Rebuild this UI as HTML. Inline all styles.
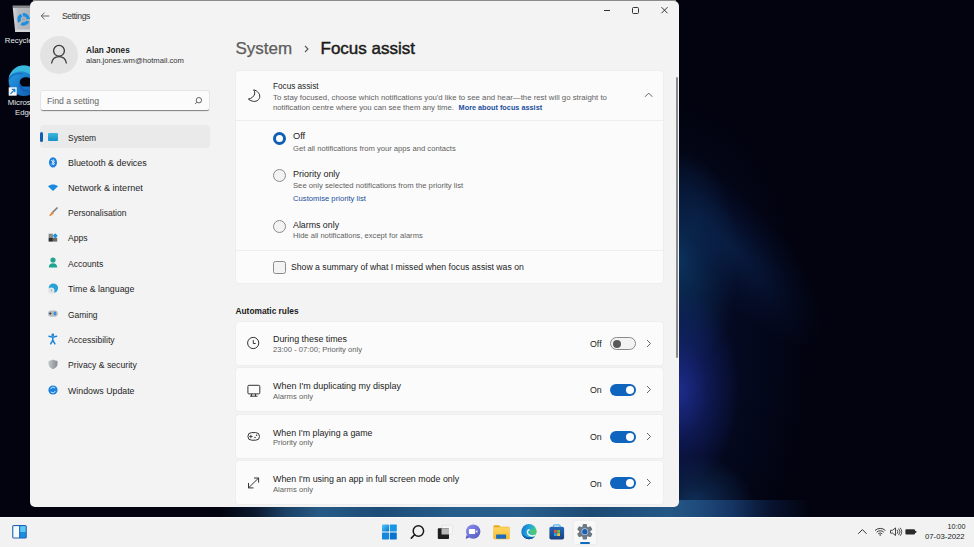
<!DOCTYPE html>
<html><head><meta charset="utf-8">
<style>
*{margin:0;padding:0;box-sizing:border-box}
html,body{width:974px;height:547px;overflow:hidden}
body{font-family:"Liberation Sans",sans-serif;position:relative;background:#02030f;color:#1b1b1b}
.a{position:absolute}
.t{position:absolute;white-space:nowrap;line-height:1}
#desk{left:0;top:0;width:974px;height:517px;background:#02030f;overflow:hidden}
#g1{left:679px;top:100px;width:260px;height:417px;background:
 radial-gradient(ellipse 60px 100px at 0px 290px, rgba(36,52,165,0.8), rgba(24,40,130,0.45) 50%, rgba(0,0,0,0) 100%),
 radial-gradient(ellipse 60px 50px at 15px 405px, rgba(26,80,140,0.55), rgba(0,0,0,0) 100%),
 radial-gradient(ellipse 60px 110px at 0px 160px, rgba(14,62,110,0.75), rgba(0,0,0,0) 100%),
 radial-gradient(ellipse 130px 250px at 0px 250px, rgba(10,25,75,0.55), rgba(0,0,0,0) 100%)}
#g3{left:610px;top:205px;width:250px;height:90px;transform:rotate(48deg);background:radial-gradient(ellipse 125px 45px at 50% 50%, rgba(12,45,95,0.5), rgba(10,30,80,0.2) 60%, rgba(0,0,0,0) 100%)}
#g2{left:220px;top:500px;width:600px;height:17px;background:linear-gradient(90deg, rgba(0,0,0,0) 0px, rgba(20,45,75,0.5) 35px, rgba(30,75,115,0.85) 65px, rgba(40,95,140,0.95) 100px, rgba(30,80,125,0.95) 160px, rgba(40,98,145,0.95) 230px, rgba(42,100,148,0.95) 300px, rgba(30,78,122,0.95) 370px, rgba(38,92,140,0.95) 450px, rgba(24,60,110,0.85) 510px, rgba(12,30,70,0.6) 550px, rgba(0,0,0,0) 590px)}
#win{left:30px;top:1px;width:649px;height:505.6px;background:#f3f3f3;border-radius:5px}
#task{left:0;top:517px;width:974px;height:30px;background:#f2f2f2;border-top:1px solid #fafafa}
.card{position:absolute;background:#fbfbfb;border-radius:3px;box-shadow:0 0 0 1px #eeeeee}
.nav{position:absolute;left:68px;font-size:8.65px;line-height:1;white-space:nowrap;color:#1f1f1f}
.title{font-size:8.95px;color:#1b1b1b}
.sub{font-size:7.67px;color:#5f5f5f}
.radio{position:absolute;width:13px;height:13px;border-radius:50%;border:1px solid #8b8b8b;background:#f3f3f3}
.tog{position:absolute;left:610px;width:26px;height:12px;border-radius:6px;background:#0f64be}
.tog i{position:absolute;right:2.5px;top:2px;width:8px;height:8px;border-radius:50%;background:#fff}
.chev{position:absolute;left:645px}
</style></head>
<body>
<div id="desk" class="a"></div><div id="g1" class="a"></div><div id="g2" class="a"></div><div id="g3" class="a"></div>

<!-- desktop icons -->
<svg class="a" style="left:0;top:0" width="30" height="120" viewBox="0 0 30 120">
 <defs>
  <linearGradient id="bin" x1="0" y1="0" x2="1" y2="0"><stop offset="0" stop-color="#d6d8dc"/><stop offset="0.3" stop-color="#b8bbbf"/><stop offset="1" stop-color="#aeb2b6"/></linearGradient>
  <linearGradient id="edg" x1="0" y1="0" x2="1" y2="1"><stop offset="0" stop-color="#35b4e8"/><stop offset="0.55" stop-color="#1a7fd0"/><stop offset="1" stop-color="#114fa0"/></linearGradient>
 </defs>
 <path d="M12.7 7.6h18v24.3h-15.5z" fill="url(#bin)"/>
 <path d="M12.5 5.4h18.2v2.6h-17.9z" fill="#85898e"/>
 <path d="M15.2 29.5h15.5v2.4h-15.3z" fill="#d2d4d7"/>
 <circle cx="23.6" cy="19.4" r="4.6" fill="none" stroke="#1e8fe0" stroke-width="3.4" stroke-dasharray="7.6 2.05" transform="rotate(-100 23.6 19.4)"/>
 <circle cx="23.6" cy="19.4" r="1.6" fill="#9aa6b0"/>
 <clipPath id="ec"><circle cx="23.8" cy="80.8" r="15.2"/></clipPath>
 <g clip-path="url(#ec)">
 <rect x="0" y="60" width="40" height="40" fill="url(#edg)"/>
 <path d="M8 79C11 73 17 70.8 23 71.6C28 72.5 31 75 33 78V60H0V79z" fill="#38b8dc"/>
 <path d="M8.8 79.5C11.5 74.5 17 72.8 22.5 73.8" fill="none" stroke="#1565b8" stroke-width="1.6" opacity="0.7"/>
 <path d="M19.7 82C20 78.5 23 77 26.5 77.2C29 77.4 31 78.5 32 80V86.5H22.5C20.8 85.5 19.7 84 19.7 82z" fill="#02030f"/>
 <path d="M29.5 84.5c1.2-1 2-2.5 2.5-4v5z" fill="#3cbf8a"/>
 <path d="M19.5 84.5C20.5 89 25 91.5 31 91.5" fill="none" stroke="#1560b8" stroke-width="2.5"/>
 </g>
 <rect x="8.7" y="87.3" width="8" height="8.4" fill="#f4f6fa"/>
 <path d="M10.5 93.8l4.3-4.3M11.8 89.3h3v3" fill="none" stroke="#1a7fd0" stroke-width="1.2"/>
</svg>
<div class="t" style="left:4.8px;top:37px;font-size:7.8px;color:#e8e8e8">Recycle</div>
<div class="t" style="left:7.8px;top:98.8px;font-size:7.8px;color:#e8e8e8">Micros</div>
<div class="t" style="left:15px;top:108.8px;font-size:7.8px;color:#e8e8e8">Edge</div>
<div class="a" style="left:33px;top:0;width:643px;height:1px;background:#8c8c8c"></div><div id="win" class="a"></div>

<!-- title bar -->
<svg class="a" style="left:40px;top:11px" width="10" height="10" viewBox="0 0 10 10"><path d="M9.2 5H1.2M4.6 1.6L1.2 5l3.4 3.4" fill="none" stroke="#555" stroke-width="0.9"/></svg>
<div class="t" style="left:62px;top:11.5px;font-size:8.6px;letter-spacing:-0.38px;color:#333">Settings</div>
<svg class="a" style="left:600px;top:4px" width="75" height="14" viewBox="0 0 75 14"><path d="M4 6.5h6" stroke="#333" stroke-width="1"/><rect x="32.5" y="3.5" width="6" height="6" rx="1" fill="none" stroke="#333" stroke-width="1"/><path d="M61.5 3.2l6 6M67.5 3.2l-6 6" stroke="#333" stroke-width="1"/></svg>

<!-- profile -->
<div class="a" style="left:40px;top:36px;width:38px;height:38px;border-radius:50%;background:#e3e3e3"></div>
<svg class="a" style="left:49px;top:44px" width="20" height="22" viewBox="0 0 20 22"><circle cx="10" cy="6.8" r="5.4" fill="none" stroke="#3a3a3a" stroke-width="1.3"/><path d="M2.5 19.5c0.8-4.5 3.8-6.8 7.5-6.8s6.7 2.3 7.5 6.8" fill="none" stroke="#3a3a3a" stroke-width="1.3"/></svg>
<div class="t" style="left:86px;top:46.9px;font-size:8.2px;font-weight:bold;color:#1b1b1b">Alan Jones</div>
<div class="t" style="left:86px;top:57.2px;font-size:7.67px;color:#333">alan.jones.wm@hotmail.com</div>

<!-- search -->
<div class="a" style="left:41px;top:91px;width:168px;height:20px;background:#fbfbfb;border-radius:2.5px;box-shadow:0 0 0 1px #e5e5e5;border-bottom:1px solid #8a8a8a"></div>
<div class="t" style="left:47px;top:96.6px;font-size:8.7px;color:#666">Find a setting</div>
<svg class="a" style="left:193px;top:95.5px" width="10" height="10" viewBox="0 0 10 10"><circle cx="5.9" cy="4.2" r="2.7" fill="none" stroke="#555" stroke-width="0.9"/><path d="M4 6.1L2 8.1" stroke="#555" stroke-width="0.9"/></svg>

<!-- nav -->
<div class="a" style="left:40px;top:125px;width:170px;height:23px;background:#eaeaea;border-radius:4px"></div>
<div class="a" style="left:40px;top:132px;width:2.5px;height:10px;background:#0f5fb8;border-radius:2px"></div>
<div class="a" style="left:48px;top:133px;width:10px;height:8px;background:linear-gradient(#3fb7e0,#1590c8);border-radius:1px"></div>
<div class="nav" style="top:133.55px;font-size:8.45px">System</div>
<div class="nav" style="top:158.75px;font-size:8.92px">Bluetooth &amp; devices</div>
<div class="nav" style="top:183.60px;font-size:9.10px">Network &amp; internet</div>
<div class="nav" style="top:209.46px;font-size:8.55px">Personalisation</div>
<div class="nav" style="top:234.38px;font-size:8.65px">Apps</div>
<div class="nav" style="top:259.93px;font-size:8.59px">Accounts</div>
<div class="nav" style="top:284.82px;font-size:8.84px">Time &amp; language</div>
<div class="nav" style="top:310.95px;font-size:8.45px">Gaming</div>
<div class="nav" style="top:336.25px;font-size:8.56px">Accessibility</div>
<div class="nav" style="top:361.36px;font-size:8.67px">Privacy &amp; security</div>
<div class="nav" style="top:386.85px;font-size:8.80px">Windows Update</div>

<!-- nav icons -->
<svg class="a" style="left:46px;top:155px" width="14" height="240" viewBox="0 0 14 240">
 <!-- bluetooth -->
 <ellipse cx="7" cy="7.4" rx="4" ry="5.2" fill="#1a7fe0"/>
 <path d="M5.2 5.2l3.4 3.4-1.6 1.5V4.6l1.6 1.5-3.4 3.4" fill="none" stroke="#fff" stroke-width="0.8"/>
 <!-- wifi -->
 <path d="M2 31.2c3-2.2 7-2.2 10 0L7 36z" fill="#1a8ae0"/>
 <!-- brush -->
 <path d="M11.5 52.5L6 58" stroke="#7a7a7a" stroke-width="1.6"/><path d="M6.2 57.5l-2.5 3.2 3.3-2.3z" fill="#e8883a" stroke="#e8883a" stroke-width="1.2"/>
 <!-- apps -->
 <rect x="2.6" y="78.7" width="4.3" height="4" fill="#8a8a8a"/><rect x="2.6" y="82.7" width="4.3" height="3.9" fill="#2e2e2e"/><rect x="6.9" y="82.7" width="4.3" height="3.9" fill="#6a6a6a"/><rect x="7.4" y="78.9" width="3.6" height="3.6" fill="#1e90e0" transform="rotate(45 9.2 80.7)"/>
 <!-- accounts -->
 <circle cx="7" cy="105" r="2.6" fill="#1fa58f"/><path d="M2.8 112.5c0-3 1.8-4.2 4.2-4.2s4.2 1.2 4.2 4.2z" fill="#1fa58f"/>
 <!-- time -->
 <circle cx="7.4" cy="133.1" r="4.7" fill="#26a2d8"/><circle cx="5.2" cy="135.7" r="3.2" fill="#e4e7ea"/><path d="M5.2 134.3v1.4l1 0.6" fill="none" stroke="#6a6a6a" stroke-width="0.6"/>
 <!-- gaming -->
 <rect x="2" y="155.6" width="9.8" height="6.1" rx="3" fill="#b9bec4"/><path d="M3.1 158.5h2.4M4.3 157.3v2.4" stroke="#3a3a3a" stroke-width="0.9"/><ellipse cx="9" cy="158.6" rx="1.4" ry="2" fill="#3f8fd6"/>
 <!-- accessibility -->
 <circle cx="6.8" cy="179.9" r="1.4" fill="#1f84d6"/><path d="M3 181.3l3.8 0.9 3.8-0.9M6.8 182v3.2l-2.1 3.6M6.8 185.2l2.1 3.6" fill="none" stroke="#1f84d6" stroke-width="1.5" stroke-linecap="round"/>
 <!-- privacy -->
 <defs><linearGradient id="shd" x1="0" y1="0" x2="1" y2="0"><stop offset="0" stop-color="#c2c6ca"/><stop offset="1" stop-color="#868b91"/></linearGradient></defs><path d="M7 204.5c1.8 1.1 3.3 1.4 4.5 1.4v3.2c0 2.5-2 4.2-4.5 5.2-2.5-1-4.5-2.7-4.5-5.2V205.9c1.2 0 2.7-0.3 4.5-1.4z" fill="url(#shd)"/>
 <!-- update -->
 <circle cx="7" cy="235" r="4.6" fill="#1a82dc"/><path d="M4.8 234a2.4 2.4 0 0 1 4.4-0.6M9.2 236a2.4 2.4 0 0 1-4.4 0.6" fill="none" stroke="#fff" stroke-width="0.8"/>
</svg>

<!-- header -->
<div class="t" style="left:235.5px;top:40.1px;font-size:17px;color:#5c5c5c;-webkit-text-stroke:0.25px #5c5c5c">System</div>
<svg class="a" style="left:302px;top:43.5px" width="10" height="10" viewBox="0 0 10 10"><path d="M3 2l3 3-3 3" fill="none" stroke="#555" stroke-width="1.1"/></svg>
<div class="t" style="left:320.5px;top:40.1px;font-size:17px;color:#1b1b1b;-webkit-text-stroke:0.45px #1b1b1b">Focus assist</div>

<!-- card 1 -->
<div class="card" style="left:236px;top:71px;width:427px;height:211.8px"></div>
<div class="a" style="left:236px;top:120px;width:427px;height:1px;background:#eeeeee"></div>
<div class="a" style="left:236px;top:250px;width:427px;height:1px;background:#eeeeee"></div>
<svg class="a" style="left:242px;top:82px" width="24" height="24" viewBox="0 0 24 24"><path d="M11.6 7.9C15.5 8.6 18.3 12 17.7 15.3C17 18.6 13.5 20 10.5 19.2C8.8 18.7 7.3 17.9 6.4 17.1C9.5 16.5 12 14.5 12.6 12C13 10.5 12.4 8.9 11.6 7.9Z" fill="none" stroke="#2b2b2b" stroke-width="1"/></svg>
<div class="t title" style="left:273px;top:82.85px;font-size:8.20px">Focus assist</div>
<div class="t sub" style="left:273px;top:93.8px;font-size:7.81px">To stay focused, choose which notifications you'd like to see and hear—the rest will go straight to</div>
<div class="t sub" style="left:273px;top:103.8px;font-size:7.75px">notification centre where you can see them any time. <b style="color:#1c4f9c;font-size:7.3px;margin-left:2.5px">More about focus assist</b></div>
<svg class="a" style="left:643px;top:91px" width="11" height="8" viewBox="0 0 11 8"><path d="M2 5.8l3.7-3.7 3.7 3.7" fill="none" stroke="#555" stroke-width="0.9"/></svg>

<div class="a" style="left:273px;top:132px;width:13px;height:13px;border-radius:50%;border:3.5px solid #0f5fb5;background:#fff"></div>
<div class="t title" style="font-size:9.28px;left:293px;top:132.42px">Off</div>
<div class="t sub" style="font-size:7.63px;left:293px;top:144.63px">Get all notifications from your apps and contacts</div>
<div class="radio" style="left:273px;top:169px"></div>
<div class="t title" style="font-size:8.97px;left:293px;top:169.98px">Priority only</div>
<div class="t sub" style="font-size:7.68px;left:293px;top:181.89px">See only selected notifications from the priority list</div>
<div class="t sub" style="font-size:7.68px;left:293px;top:194.80px;color:#1c4f9c">Customise priority list</div>
<div class="radio" style="left:273px;top:220px"></div>
<div class="t title" style="font-size:8.82px;left:293px;top:221.11px">Alarms only</div>
<div class="t sub" style="font-size:7.59px;left:293px;top:232.17px">Hide all notifications, except for alarms</div>
<div class="a" style="left:273px;top:261px;width:13px;height:13px;border-radius:2.5px;border:1px solid #8b8b8b;background:#f3f3f3"></div>
<div class="t" style="left:291px;top:262.81px;font-size:8.69px;color:#1b1b1b">Show a summary of what I missed when focus assist was on</div>

<!-- automatic rules -->
<div class="t" style="left:235.5px;top:306.9px;font-size:8.35px;font-weight:bold;color:#1b1b1b">Automatic rules</div>

<div class="card" style="left:236px;top:322px;width:427px;height:43px"></div>
<div class="card" style="left:236px;top:368px;width:427px;height:43px"></div>
<div class="card" style="left:236px;top:415px;width:427px;height:43px"></div>
<div class="card" style="left:236px;top:461px;width:427px;height:43px"></div>

<svg class="a" style="left:246px;top:336px" width="14" height="14" viewBox="0 0 14 14"><circle cx="7.2" cy="7" r="5.6" fill="none" stroke="#333" stroke-width="1"/><path d="M7.3 4.1v3.4h2.4" fill="none" stroke="#333" stroke-width="1"/></svg>
<div class="t title" style="font-size:8.88px;left:273px;top:335.36px">During these times</div>
<div class="t sub" style="font-size:7.63px;left:273px;top:346.23px">23:00 - 07:00; Priority only</div>
<div class="t" style="left:590px;top:339.9px;font-size:8.8px;color:#1b1b1b">Off</div>
<div class="a" style="left:610px;top:337px;width:26px;height:13px;border-radius:6.5px;border:1px solid #8a8a8a;background:#f3f3f3"></div>
<div class="a" style="left:612.5px;top:339.5px;width:8px;height:8px;border-radius:50%;background:#5a5a5a"></div>
<svg class="a chev" style="top:339px" width="8" height="9" viewBox="0 0 8 9"><path d="M2 1l3.5 3.5L2 8" fill="none" stroke="#555" stroke-width="0.9"/></svg>

<svg class="a" style="left:246px;top:383px" width="15" height="15" viewBox="0 0 15 15"><rect x="1.9" y="2.3" width="11.9" height="8.6" rx="1" fill="none" stroke="#333" stroke-width="1"/><path d="M5.6 10.9v2.3M9.5 10.9v2.3M4 13.2h7.5" fill="none" stroke="#333" stroke-width="1"/></svg>
<div class="t title" style="font-size:8.99px;left:273px;top:381.56px">When I'm duplicating my display</div>
<div class="t sub" style="font-size:7.67px;left:273px;top:392.50px">Alarms only</div>
<div class="t" style="left:590px;top:386.2px;font-size:8.8px;color:#1b1b1b">On</div>
<div class="tog" style="top:384px"><i></i></div>
<svg class="a chev" style="top:385px" width="8" height="9" viewBox="0 0 8 9"><path d="M2 1l3.5 3.5L2 8" fill="none" stroke="#555" stroke-width="0.9"/></svg>

<svg class="a" style="left:246px;top:429px" width="15" height="14" viewBox="0 0 15 14"><rect x="1.9" y="3.6" width="11.6" height="7.6" rx="3.8" fill="none" stroke="#333" stroke-width="1"/><path d="M3.2 7.5h3.4M4.9 5.8v3.4" stroke="#333" stroke-width="0.9"/><circle cx="10.6" cy="6.2" r="0.75" fill="#333"/><circle cx="9" cy="8.4" r="0.75" fill="#333"/></svg>
<div class="t title" style="font-size:8.85px;left:273px;top:428.8px">When I'm playing a game</div>
<div class="t sub" style="font-size:7.67px;left:273px;top:439.4px">Priority only</div>
<div class="t" style="left:590px;top:433.2px;font-size:8.8px;color:#1b1b1b">On</div>
<div class="tog" style="top:431px"><i></i></div>
<svg class="a chev" style="top:432px" width="8" height="9" viewBox="0 0 8 9"><path d="M2 1l3.5 3.5L2 8" fill="none" stroke="#555" stroke-width="0.9"/></svg>

<svg class="a" style="left:246px;top:476px" width="15" height="14" viewBox="0 0 15 14"><path d="M2.5 11.9L12.6 2M8 2H12.6V6.6M2.5 7V11.9H7.5" fill="none" stroke="#333" stroke-width="1"/></svg>
<div class="t title" style="font-size:8.89px;left:273px;top:475.1px">When I'm using an app in full screen mode only</div>
<div class="t sub" style="font-size:7.67px;left:273px;top:485.8px">Alarms only</div>
<div class="t" style="left:590px;top:479.6px;font-size:8.8px;color:#1b1b1b">On</div>
<div class="tog" style="top:477px"><i></i></div>
<svg class="a chev" style="top:478px" width="8" height="9" viewBox="0 0 8 9"><path d="M2 1l3.5 3.5L2 8" fill="none" stroke="#555" stroke-width="0.9"/></svg>

<!-- scrollbar -->
<div class="a" style="left:676px;top:77px;width:2px;height:281px;background:#8a8a8a;border-radius:1px"></div>

<!-- taskbar -->
<div id="task" class="a"></div>
<svg class="a" style="left:0;top:517px" width="974" height="30" viewBox="0 517 974 30">
 <defs>
  <linearGradient id="wl" x1="0" y1="0" x2="1" y2="1"><stop offset="0" stop-color="#52c8f8"/><stop offset="1" stop-color="#0a74d0"/></linearGradient>
  <linearGradient id="tm" x1="0" y1="0" x2="1" y2="1"><stop offset="0" stop-color="#8a90ee"/><stop offset="1" stop-color="#5257c0"/></linearGradient>
  <linearGradient id="fd" x1="0" y1="0" x2="0" y2="1"><stop offset="0" stop-color="#ffd662"/><stop offset="1" stop-color="#f8bd30"/></linearGradient>
  <linearGradient id="ed2" x1="0" y1="0.2" x2="1" y2="0.6"><stop offset="0" stop-color="#1470cc"/><stop offset="0.5" stop-color="#22a8d8"/><stop offset="1" stop-color="#52d66a"/></linearGradient>
  <linearGradient id="st" x1="0" y1="0" x2="0" y2="1"><stop offset="0" stop-color="#2468b8"/><stop offset="1" stop-color="#173f80"/></linearGradient>
 </defs>
 <!-- widgets -->
 <rect x="12.2" y="525" width="14.6" height="13.6" rx="1.6" fill="#1e63b0"/>
 <rect x="13.3" y="526.1" width="5.8" height="11.4" fill="#f4fbff"/>
 <rect x="20.2" y="526.1" width="5.5" height="6.2" fill="#5cc8f5"/>
 <rect x="20.2" y="532.3" width="5.5" height="5.2" fill="#1a8ee0"/>
 <!-- start -->
 <rect x="382" y="524.6" width="7" height="7" rx="0.6" fill="url(#wl)"/>
 <rect x="389.8" y="524.6" width="7" height="7" rx="0.6" fill="#1a96e6"/>
 <rect x="382" y="532.4" width="7" height="7" rx="0.6" fill="#1688dc"/>
 <rect x="389.8" y="532.4" width="7" height="7" rx="0.6" fill="#0a74d0"/>
 <!-- search -->
 <circle cx="418.4" cy="531" r="5.2" fill="none" stroke="#1a1a1a" stroke-width="1.5"/>
 <path d="M414.6 534.8l-3.3 3.3" stroke="#1a1a1a" stroke-width="1.6" stroke-linecap="round"/>
 <!-- task view -->
 <rect x="441.7" y="525.2" width="10.8" height="9.3" rx="0.8" fill="#f7f7f7" stroke="#d6d6d6" stroke-width="0.5"/>
 <rect x="437.8" y="528.3" width="11.2" height="10.7" rx="0.8" fill="#1e1e1e"/>
 <rect x="441.5" y="528.3" width="7.5" height="6.2" fill="#b9b9b9"/>
 <!-- teams -->
 <circle cx="473.2" cy="531.6" r="7.2" fill="url(#tm)"/>
 <path d="M466.5 535l-0.8 4 4-1.8z" fill="#5a5fc8"/>
 <rect x="468.9" y="529" width="6.3" height="5" rx="0.8" fill="#fff"/>
 <path d="M475.6 531.5l1.8-1.4v2.8z" fill="#fff"/>
 <!-- folder -->
 <path d="M493.5 526.2a1 1 0 0 1 1-1h4.5l1.5 1.5h8a1 1 0 0 1 1 1v10.5a1 1 0 0 1-1 1h-14a1 1 0 0 1-1-1z" fill="#e8a818"/>
 <rect x="493.5" y="527.3" width="15.8" height="11.7" rx="1" fill="url(#fd)"/>
 <rect x="496.1" y="534.6" width="10" height="4.2" rx="0.5" fill="#1a6bbf"/>
 <!-- edge -->
 <clipPath id="ec2"><circle cx="529" cy="531.6" r="7.6"/></clipPath>
 <g clip-path="url(#ec2)">
 <rect x="521" y="523" width="16" height="17" fill="url(#ed2)"/>
 <path d="M520 531C522 534 524 537.5 529 538C532 538.3 535 537 537 535V540H520z" fill="#0f4f9e"/>
 <path d="M520 530C521.5 533.5 523.5 536 527 536.8C530 537.5 533.5 537 537 535.2V537.5C534 539 530 539 527 538.2C523.5 537.5 521 535 520 533z" fill="#1262b8"/>
 <path d="M529.8 530.2C531.5 529.3 534.5 529 537 531.5C536.8 533.6 534 534.6 531.5 534C530 533.5 529.4 532 529.8 530.2z" fill="#4cc67c"/>
 <path d="M529.6 529.7C527.3 529.7 526.8 532.5 528.2 534.2C529.8 536 532.8 536.3 535.8 535.3" fill="none" stroke="#eef7fb" stroke-width="1.5"/>
 </g>
 <!-- store -->
 <path d="M553.3 527.3v-0.9a1.6 1.6 0 0 1 1.6-1.6h3.7a1.6 1.6 0 0 1 1.6 1.6v0.9" fill="none" stroke="#4fb6ee" stroke-width="1.2"/>
 <rect x="549.4" y="526.8" width="14.7" height="12.8" rx="1.8" fill="url(#st)"/>
 <rect x="554" y="530" width="2.8" height="2.8" fill="#e8553a"/><rect x="557.2" y="530" width="2.8" height="2.8" fill="#6cc04a"/>
 <rect x="554" y="533.2" width="2.8" height="2.8" fill="#2aa4f0"/><rect x="557.2" y="533.2" width="2.8" height="2.8" fill="#f6c12e"/>
 <!-- settings -->
 <rect x="573.2" y="520.3" width="23.4" height="24.2" rx="3" fill="#f8f8f8" stroke="#e6e6e6" stroke-width="0.6"/>
 <g transform="translate(584.8 531.7)" fill="#6e7882">
  <circle r="5.6"/>
  <rect x="-2.2" y="-7.8" width="4.4" height="15.6" rx="1.2"/>
  <rect x="-2.2" y="-7.8" width="4.4" height="15.6" rx="1.2" transform="rotate(60)"/>
  <rect x="-2.2" y="-7.8" width="4.4" height="15.6" rx="1.2" transform="rotate(120)"/>
 </g>
 <circle cx="584.8" cy="531.7" r="3.4" fill="#a8c8ec"/>
 <circle cx="584.8" cy="531.7" r="2.6" fill="#1b5fae"/>
 <rect x="580" y="542" width="10" height="2" rx="1" fill="#0f6cbd"/>
 <!-- tray -->
 <path d="M858.2 533.8l4.2-4.2 4.2 4.2" fill="none" stroke="#333" stroke-width="1"/>
 <path d="M875 530.5a7.5 7.5 0 0 1 10.4 0M876.6 532.2a5.2 5.2 0 0 1 7.2 0M878.2 533.8a2.9 2.9 0 0 1 4 0" fill="none" stroke="#333" stroke-width="0.95"/>
 <circle cx="880.2" cy="535" r="0.8" fill="#333"/>
 <path d="M890.5 530.3h2l3-2.4v7.6l-3-2.4h-2z" fill="none" stroke="#333" stroke-width="0.9"/>
 <path d="M897 529.8a3 3 0 0 1 0 4M898.6 528.5a5 5 0 0 1 0 6.6M900.2 527.8a6.5 6.5 0 0 1 0 8" fill="none" stroke="#333" stroke-width="0.85"/>
 <rect x="905.4" y="529.2" width="9.6" height="5.4" rx="1" fill="#2a2a2a"/>
 <rect x="915" y="530.9" width="1.3" height="2" fill="#2a2a2a"/>
</svg>
<div class="t" style="left:947.4px;top:522.8px;font-size:7.2px;color:#222">10:00</div>
<div class="t" style="left:925px;top:533.2px;font-size:7.75px;color:#222">07-03-2022</div>
</body></html>
